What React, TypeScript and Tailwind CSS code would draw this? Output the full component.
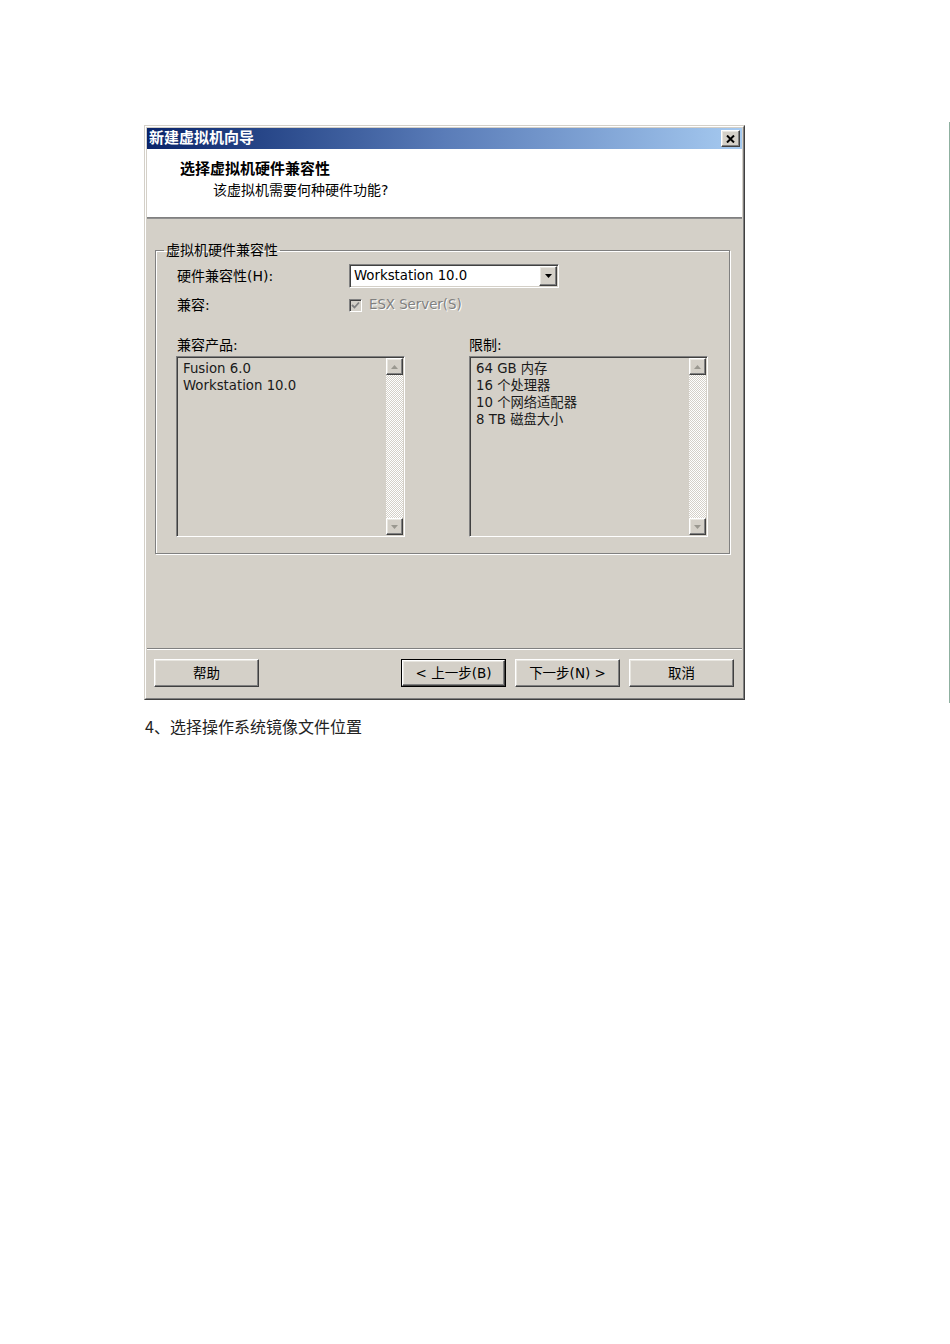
import React from "react";

const raised =
  "border border-t-white border-l-white border-r-[#404040] border-b-[#404040] shadow-[inset_-1px_-1px_0_#808080,inset_1px_1px_0_#e8e6e0]";
const sunken =
  "border border-t-[#808080] border-l-[#808080] border-r-white border-b-white shadow-[inset_1px_1px_0_#404040,inset_-1px_-1px_0_#d4d0c8]";
const font = "font-['DejaVu_Sans','Noto_Sans_CJK_SC',sans-serif]";

function Tri({ up, color }: { up?: boolean; color: string }) {
  return (
    <svg width="7" height="4" viewBox="0 0 7 4">
      {up ? <polygon points="3.5,0 7,4 0,4" fill={color} /> : <polygon points="0,0 7,0 3.5,4" fill={color} />}
    </svg>
  );
}

function ScrollBar() {
  return (
    <div className="flex h-full w-[17px] flex-col">
      <div className={`flex h-[17px] w-[17px] items-center justify-center bg-[#d4d0c8] ${raised}`}>
        <Tri up color="#9a9890" />
      </div>
      <div className="flex-1 bg-[image:repeating-conic-gradient(#ffffff_0_25%,#d4d0c8_0_50%)] bg-[length:2px_2px]" />
      <div className={`flex h-[17px] w-[17px] items-center justify-center bg-[#d4d0c8] ${raised}`}>
        <Tri color="#9a9890" />
      </div>
    </div>
  );
}

function ListBox({ items, width }: { items: string[]; width: string }) {
  return (
    <div className={`flex h-[181px] ${width} bg-[#d4d0c8] ${sunken} p-[1px]`}>
      <div className="flex-1 pl-[5px] pt-[2px] text-[13.3px] leading-[17px] text-[#1a1a1a]">
        {items.map((t) => (
          <div key={t} className="whitespace-nowrap">
            {t}
          </div>
        ))}
      </div>
      <ScrollBar />
    </div>
  );
}

function Btn({ children, def }: { children: React.ReactNode; def?: boolean }) {
  const inner = (
    <div
      className={`flex h-full w-full items-center justify-center bg-[#d4d0c8] text-[13.5px] text-black ${raised}`}
    >
      {children}
    </div>
  );
  return def ? (
    <div className="h-[28px] w-[105px] border border-black">{inner}</div>
  ) : (
    <div className="h-[28px] w-[105px]">{inner}</div>
  );
}

export default function App() {
  return (
    <div className={`relative min-h-[1344px] w-[950px] bg-white ${font}`}>
      <div className="absolute left-[949px] top-[122px] h-[581px] w-px bg-[#8fb0a0]" />
      <div className="pl-[144px] pt-[125px]">
        {/* Dialog */}
        <div className="h-[575px] w-[601px] border border-t-[#d4d0c8] border-l-[#d4d0c8] border-r-[#404040] border-b-[#404040] bg-[#d4d0c8]">
          <div className="flex h-full w-full flex-col border border-t-white border-l-white border-r-[#808080] border-b-[#808080] p-px">
            {/* Title bar */}
            <div className="flex h-[21px] items-center justify-between bg-gradient-to-r from-[#0a246a] via-[#5a7cb8] to-[#a6caf0] pl-[2px] pr-[2px]">
              <span className="text-[15px] font-bold leading-none text-white">新建虚拟机向导</span>
              <div className={`flex h-[17px] w-[19px] items-center justify-center bg-[#d4d0c8] ${raised}`}>
                <svg width="9" height="8" viewBox="0 0 9 8">
                  <path d="M1 0.5 L8 7.5 M8 0.5 L1 7.5" stroke="#000" strokeWidth="2" />
                </svg>
              </div>
            </div>
            {/* Header */}
            <div className="h-[68px] bg-white pt-[10px]">
              <div className="pl-[33px] text-[15px] font-bold leading-[20px] text-black">选择虚拟机硬件兼容性</div>
              <div className="pl-[66px] pt-[1px] text-[14px] leading-[20px] text-black">该虚拟机需要何种硬件功能?</div>
            </div>
            <div className="h-px bg-[#808080]" />
            <div className="h-px bg-[#909090]" />
            {/* Body */}
            <div className="flex-1 pl-[8px] pt-[22px]">
              <fieldset className="w-[575px] border border-[#808080] pb-[16px] pl-[20px] pt-[5px] shadow-[1px_1px_0_#fff,inset_1px_1px_0_#fff]">
                <legend className="-ml-[12px] px-[2px] text-[14px] leading-[18px] text-black">虚拟机硬件兼容性</legend>
                <div className="flex h-[24px] items-center">
                  <div className="w-[173px] pl-[1px] text-[14px] text-black">硬件兼容性(H):</div>
                  <div className={`flex h-[24px] w-[210px] items-center bg-white ${sunken} p-[1px]`}>
                    <div className="flex-1 pl-[3px] text-[13.3px] text-black">Workstation 10.0</div>
                    <div className={`flex h-full w-[18px] items-center justify-center bg-[#d4d0c8] ${raised}`}>
                      <Tri color="#000" />
                    </div>
                  </div>
                </div>
                <div className="mt-[6px] flex h-[22px] items-center">
                  <div className="w-[173px] pl-[1px] text-[14px] text-black">兼容:</div>
                  <div className={`flex h-[13px] w-[13px] items-center justify-center bg-[#d4d0c8] ${sunken}`}>
                    <svg width="9" height="9" viewBox="0 0 9 9">
                      <path d="M1 4 L3.5 6.5 L8 1.5" stroke="#808080" strokeWidth="1.8" fill="none" />
                    </svg>
                  </div>
                  <span className="ml-[7px] text-[13.3px] text-[#808080] [text-shadow:1px_1px_0_#fff]">ESX Server(S)</span>
                </div>
                <div className="mt-[20px] flex gap-[64px]">
                  <div>
                    <div className="pl-[1px] text-[14px] leading-[18px] text-black">兼容产品:</div>
                    <div className="mt-[2px]">
                      <ListBox width="w-[229px]" items={["Fusion 6.0", "Workstation 10.0"]} />
                    </div>
                  </div>
                  <div>
                    <div className="text-[14px] leading-[18px] text-black">限制:</div>
                    <div className="mt-[2px]">
                      <ListBox width="w-[239px]" items={["64 GB 内存", "16 个处理器", "10 个网络适配器", "8 TB 磁盘大小"]} />
                    </div>
                  </div>
                </div>
              </fieldset>
            </div>
            <div className="h-px bg-[#808080]" />
            <div className="h-px bg-white" />
            {/* Buttons */}
            <div className="flex h-[47px] items-start pl-[7px] pr-[8px] pt-[9px]">
              <Btn>帮助</Btn>
              <div className="flex-1" />
              <div className="flex gap-[9px]">
                <Btn def>&lt; 上一步(B)</Btn>
                <Btn>下一步(N) &gt;</Btn>
                <Btn>取消</Btn>
              </div>
            </div>
          </div>
        </div>
        <div className="mt-[16px] pl-[1px] font-['Noto_Sans_CJK_SC',sans-serif] text-[16px] leading-[20px] text-[#222]">
          4、选择操作系统镜像文件位置
        </div>
      </div>
    </div>
  );
}
